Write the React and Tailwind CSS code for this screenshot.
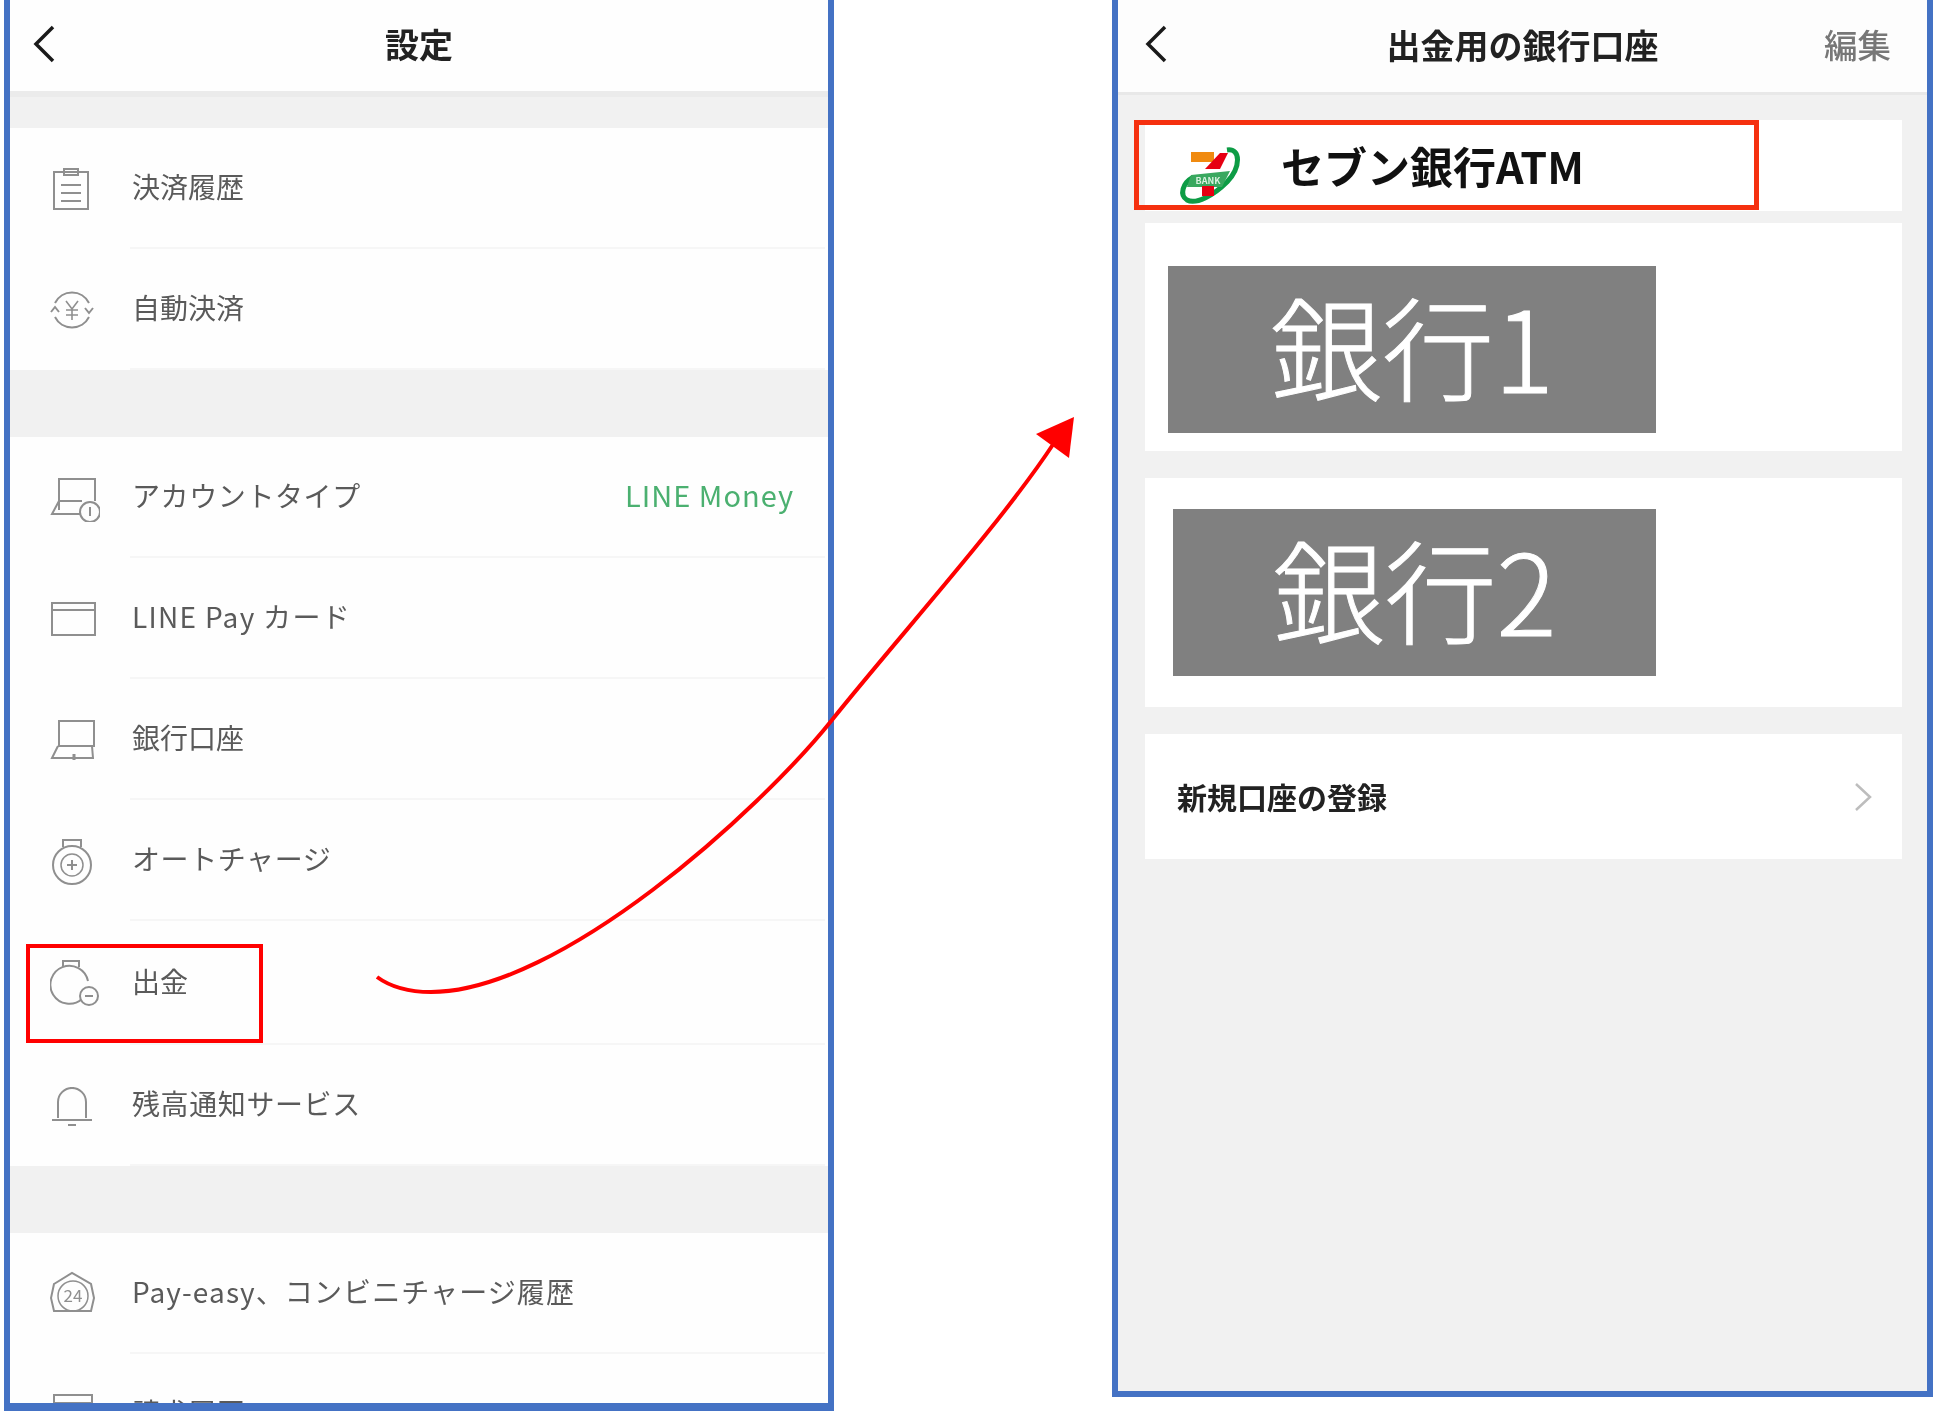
import React from "react";

// small outline icons for the settings list, drawn in a 50x48 box
const Icon = ({ children }) => (
  <svg width="50" height="48" viewBox="0 0 50 48" fill="none" stroke="#8f8f8f" strokeWidth="2" className="shrink-0 blur-[0.5px]">
    {children}
  </svg>
);

const icons = {
  clipboard: (
    <>
      <rect x="4" y="7" width="34" height="37" />
      <rect x="14" y="4" width="14" height="6" />
      <path d="M11 20h20M11 28h20M11 36h20" />
    </>
  ),
  yen: (
    <>
      <path d="M5 17A19 19 0 0 1 39 17M39 31A19 19 0 0 1 5 31" />
      <path d="M1 26l4-5 4 5M35 22l4 5 4-5" />
      <path d="M16 15l6 8 6-8M22 23v11M16 24h12M16 29h12" strokeWidth="1.6" />
    </>
  ),
  laptopCoin: (
    <>
      <path d="M9 36V5h36v22" />
      <path d="M9 27h23M9 27L2 40h28" />
      <circle cx="40" cy="38" r="10" />
      <path d="M40 33v9" />
    </>
  ),
  card: (
    <>
      <rect x="2" y="8" width="43" height="32" />
      <path d="M2 15h43" />
    </>
  ),
  laptop: (
    <>
      <rect x="9" y="5" width="35" height="25" />
      <path d="M8 30L2 42h41l-1-12" />
      <path d="M24 38v6" strokeWidth="3" />
    </>
  ),
  charge: (
    <>
      <circle cx="22" cy="28" r="19" />
      <path d="M13 10V3h18v7" />
      <circle cx="22" cy="28" r="11" strokeWidth="1.5" />
      <path d="M22 23v10M17 28h10" />
    </>
  ),
  withdraw: (
    <>
      <path d="M32 40A19 19 0 1 1 38 22" />
      <path d="M13 8V2h16v6" />
      <circle cx="39" cy="37" r="9" fill="#fff" />
      <path d="M35 37h8" />
    </>
  ),
  bell: (
    <>
      <path d="M8 36V20a14 14 0 0 1 28 0v16" />
      <path d="M2 38h40M18 43h8" />
      <path d="M20 6h4" />
    </>
  ),
  day24: (
    <>
      <path d="M4 14L22 3l19 11 3 14-3 13H4L1 28z" />
      <circle cx="23" cy="26" r="15" strokeWidth="1.5" />
      <text x="23" y="32" textAnchor="middle" fontSize="17" fill="#8f8f8f" stroke="none">24</text>
    </>
  ),
  receipt: (
    <>
      <rect x="4" y="4" width="38" height="38" />
      <path d="M4 12h38" />
    </>
  ),
};

const Row = ({ icon, label, right, tracking = "", height = "h-[121px]" }) => (
  <div className={`flex shrink-0 items-center bg-[#fefefe] pl-[40px] ${height}`}>
    <Icon>{icons[icon]}</Icon>
    <div className="ml-[30px] mr-[3px] flex h-full flex-1 items-center justify-between border-b-2 border-[#f6f6f6] pb-[3px] pl-[2px] pr-[31px]">
      <span className={`text-[28px] text-[#5a5a5a] blur-[0.5px] ${tracking}`}>{label}</span>
      {right && <span className="text-[29px] tracking-[1px] text-[#4bb070] blur-[0.5px]">{right}</span>}
    </div>
  </div>
);

const Band = ({ className }) => <div className={`shrink-0 bg-[#f1f1f1] ${className}`} />;

const Back = () => (
  <svg width="26" height="40" viewBox="0 0 26 40" fill="none" stroke="#1a1a1a" strokeWidth="3.5">
    <path d="M22 3L5 20l17 17" />
  </svg>
);

const BankImage = ({ label, className }) => (
  <div className={`flex h-[167px] items-center justify-center bg-[#808080] pb-[11px] text-[112px] font-light leading-none text-white blur-[0.4px] [-webkit-text-stroke:1px_white] ${className}`}>
    {label}
  </div>
);

const SevenLogo = () => (
  <svg width="70" height="62" viewBox="0 0 70 62" className="shrink-0 blur-[0.5px]">
    <path d="M49 5C63 3 63 22 49 37C36 50 18 60 9 55C1 50 5 38 14 33" fill="none" stroke="#0d9c45" strokeWidth="5" />
    <rect x="13" y="7" width="23" height="10" fill="#f08a10" />
    <path d="M50 8L42 8L27 24L42 24Z" fill="#e60012" />
    <path d="M13 30L52 26L44 42L9 42Z" fill="#39a85f" />
    <rect x="24" y="41" width="12" height="10" fill="#e60012" />
    <text x="30" y="39" textAnchor="middle" fontSize="9" fontWeight="700" fill="#d8f0df">BANK</text>
  </svg>
);

const Card = ({ className, children }) => <div className={`bg-white ${className}`}>{children}</div>;

export default function App() {
  return (
    <div className="relative flex h-[1417px] w-[1937px] items-start overflow-hidden bg-white pl-[4px] font-['Noto_Sans_CJK_JP',sans-serif]">
      {/* settings screen */}
      <div className="flex h-[1411px] w-[830px] shrink-0 flex-col overflow-hidden border-x-[6px] border-b-[8px] border-[#4472c4] bg-white">
        <header className="grid h-[97px] shrink-0 grid-cols-[1fr_auto_1fr] items-center border-b-[6px] border-[#ebebeb] bg-[#fefefe] px-[21px] pb-[4px]">
          <Back />
          <h1 className="text-[34px] font-bold text-[#222] blur-[0.4px]">設定</h1>
          <span />
        </header>
        <Band className="h-[31px]" />
        <Row icon="clipboard" label="決済履歴" />
        <Row icon="yen" label="自動決済" />
        <Band className="h-[67px]" />
        <Row icon="laptopCoin" label="アカウントタイプ" right="LINE Money" tracking="tracking-[0.6px]" />
        <Row icon="card" label="LINE Pay カード" tracking="tracking-[1.3px]" />
        <Row icon="laptop" label="銀行口座" />
        <Row icon="charge" label="オートチャージ" tracking="tracking-[0.6px]" />
        <Row icon="withdraw" label="出金" height="h-[124px]" />
        <Row icon="bell" label="残高通知サービス" tracking="tracking-[0.6px]" />
        <Band className="h-[67px]" />
        <Row icon="day24" label="Pay-easy、コンビニチャージ履歴" tracking="tracking-[1.1px]" />
        <Row icon="receipt" label="請求履歴" />
      </div>

      {/* bank account screen */}
      <div className="ml-[278px] flex h-[1397px] w-[821px] shrink-0 flex-col border-x-[6px] border-b-[6px] border-[#4472c4] bg-[#f1f1f1]">
        <header className="grid h-[95px] shrink-0 grid-cols-[1fr_auto_1fr] items-center border-b-[3px] border-[#e8e8e8] bg-[#fdfdfd] px-[25px] pb-[4px]">
          <Back />
          <h1 className="text-[34px] font-bold text-[#222] blur-[0.4px]">出金用の銀行口座</h1>
          <span className="justify-self-end pr-[11px] text-[33.5px] font-medium text-[#777] blur-[0.4px]">編集</span>
        </header>
        <div className="flex flex-col pl-[27px] pr-[25px] pt-[25px]">
          <Card className="flex h-[91px] items-end pb-[4px] pl-[33px]">
            <SevenLogo />
            <span className="mb-[20px] ml-[33px] text-[43px] font-bold leading-none text-[#111] blur-[0.4px]">セブン銀行ATM</span>
          </Card>
          <Card className="mt-[12px] h-[228px] pl-[23px] pt-[43px]">
            <BankImage label="銀行1" className="w-[488px]" />
          </Card>
          <Card className="mt-[27px] h-[229px] pl-[28px] pt-[31px]">
            <BankImage label="銀行2" className="w-[483px]" />
          </Card>
          <Card className="mt-[27px] flex h-[125px] items-center justify-between pl-[32px] pr-[30px]">
            <span className="text-[30px] font-bold text-[#222] blur-[0.4px]">新規口座の登録</span>
            <svg width="18" height="30" viewBox="0 0 18 30" fill="none" stroke="#bdbdbd" strokeWidth="2.5">
              <path d="M2 2l14 13L2 28" />
            </svg>
          </Card>
        </div>
      </div>

      {/* annotations on top of the screens */}
      <div className="absolute left-[26px] top-[944px] h-[99px] w-[237px] border-4 border-[#ff0000]" />
      <div className="absolute left-[1134px] top-[120px] h-[90px] w-[625px] border-[5px] border-[#f5300f]" />
      <svg className="absolute left-0 top-0" width="1937" height="1417" fill="none">
        <path d="M377 977C392 988 410 992 431 992C560 992 760 810 832 720C900 635 1000 525 1054 443" stroke="#ff0000" strokeWidth="4" />
        <path d="M1074 417L1036 434L1069 458Z" fill="#ff0000" />
      </svg>
    </div>
  );
}
